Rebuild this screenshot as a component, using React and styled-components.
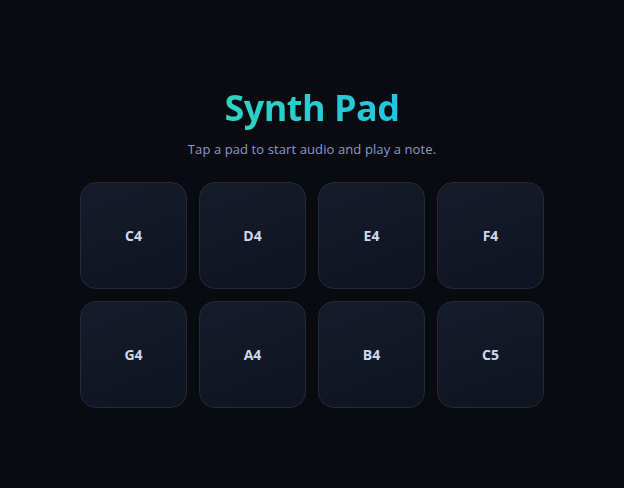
import React from "react";
import styled, { createGlobalStyle } from "styled-components";

const GlobalStyle = createGlobalStyle`
  html, body {
    margin: 0;
    padding: 0;
    background: #0a0b11;
  }
  body {
    font-family: "Open Sans", "Noto Sans", sans-serif;
  }
`;

const Page = styled.main`
  min-height: 100vh;
  display: flex;
  flex-direction: column;
  align-items: center;
  justify-content: center;
  box-sizing: border-box;
  padding-top: 5px;
`;

const Title = styled.h1`
  margin: 0;
  font-size: 36px;
  font-weight: 700;
  line-height: 44px;
  letter-spacing: -0.5px;
  background: linear-gradient(90deg, #2dd4bf, #22c5e0);
  -webkit-background-clip: text;
  background-clip: text;
  color: transparent;
`;

const Subtitle = styled.p`
  margin: 10px 0 24px;
  font-size: 13px;
  line-height: 18px;
  letter-spacing: 0.1px;
  color: #8a9bc4;
`;

const Grid = styled.div`
  display: grid;
  grid-template-columns: repeat(4, 107px);
  grid-auto-rows: 107px;
  gap: 12px;
`;

const Pad = styled.button`
  box-sizing: border-box;
  border: 1px solid #222a3b;
  border-radius: 16px;
  background: linear-gradient(160deg, #161b2c, #10141f);
  color: #cdd9f0;
  font-family: inherit;
  font-size: 14px;
  font-weight: 700;
  cursor: pointer;
  padding: 0;
`;

const notes = ["C4", "D4", "E4", "F4", "G4", "A4", "B4", "C5"];

export default function App() {
  return (
    <>
      <GlobalStyle />
      <Page>
        <Title>Synth Pad</Title>
        <Subtitle>Tap a pad to start audio and play a note.</Subtitle>
        <Grid>
          {notes.map((n) => (
            <Pad key={n}>{n}</Pad>
          ))}
        </Grid>
      </Page>
    </>
  );
}
